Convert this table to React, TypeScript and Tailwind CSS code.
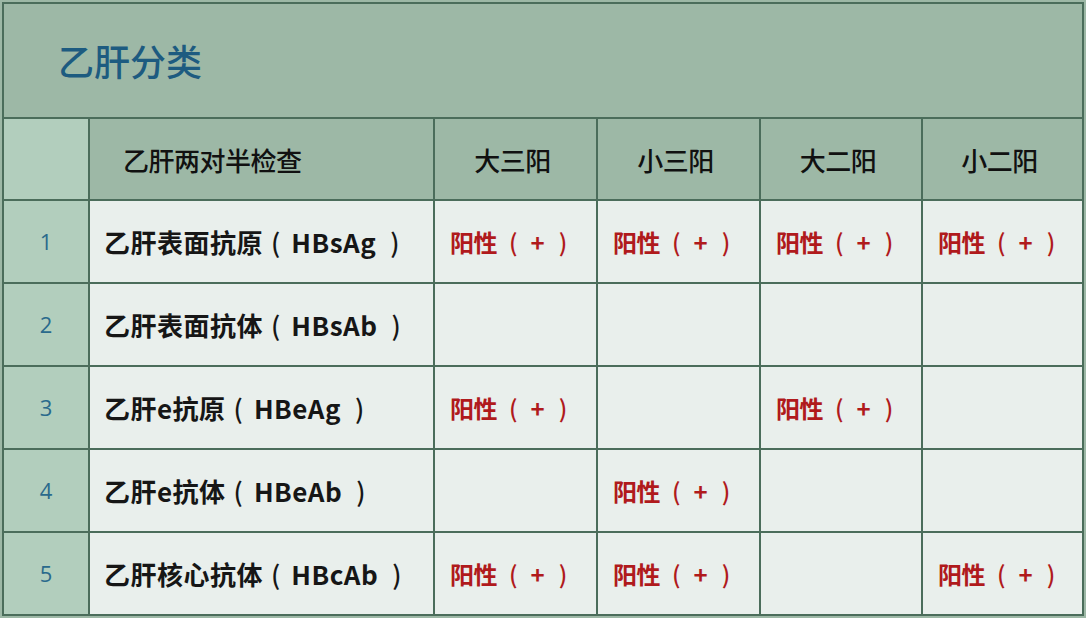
import React from 'react';

const cols = ['大三阳', '小三阳', '大二阳', '小二阳'];

const rows: { cn: string; en: string; marks: boolean[] }[] = [
  { cn: '乙肝表面抗原', en: 'HBsAg', marks: [true, true, true, true] },
  { cn: '乙肝表面抗体', en: 'HBsAb', marks: [false, false, false, false] },
  { cn: '乙肝e抗原', en: 'HBeAg', marks: [true, false, true, false] },
  { cn: '乙肝e抗体', en: 'HBeAb', marks: [false, true, false, false] },
  { cn: '乙肝核心抗体', en: 'HBcAb', marks: [true, true, false, true] },
];

const font = { fontFamily: '"Noto Sans CJK SC", "Noto Sans", sans-serif' };

const Positive = () => (
  <span className="flex items-center text-[24px] font-bold text-[#b01a1c]">
    <span className="tracking-[-0.5px]">阳性</span>
    <span className="ml-[12px] font-medium">(</span>
    <span className="ml-[13px]">+</span>
    <span className="ml-[14px] font-medium">)</span>
  </span>
);

export default function App() {
  return (
    <div className="w-[1086px] h-[618px] bg-[#9db8a6] p-[2px]" style={font}>
      <div className="grid grid-cols-[84px_343px_161px_161px_160px_159px] grid-rows-[113px_80px_81px_81px_81px_81px_81px] gap-[2px] p-[2px] bg-[#4b6d5b]">
        <div className="col-span-6 bg-[#9db8a6] flex items-center pl-[54px] pb-[2px]">
          <span className="text-[36px] font-medium text-[#1d5b80]">乙肝分类</span>
        </div>

        <div className="bg-[#b2cebd]" />
        <div className="bg-[#9db8a6] flex items-center pl-[33px]">
          <span className="text-[26px] font-medium text-[#111] tracking-[-0.5px]">乙肝两对半检查</span>
        </div>
        {cols.map((c) => (
          <div key={c} className="bg-[#9db8a6] flex items-center justify-center pr-[6px]">
            <span className="text-[26px] font-medium text-[#111] tracking-[-0.5px]">{c}</span>
          </div>
        ))}

        {rows.map((r, i) => (
          <React.Fragment key={r.cn}>
            <div className="bg-[#b2cebd] flex items-center justify-center">
              <span className="text-[22px] text-[#2a6a8c]" style={{ fontFamily: '"Open Sans", sans-serif' }}>{i + 1}</span>
            </div>
            <div className="bg-[#e9efec] flex items-center pl-[14px] text-[26px] font-bold text-[#161616]">
              <span className="tracking-[0.5px]">{r.cn}</span>
              <span className="ml-[8px] font-medium">(</span>
              <span className="ml-[11px] tracking-[0.5px]">{r.en}</span>
              <span className="ml-[14px] font-medium">)</span>
            </div>
            {r.marks.map((m, j) => (
              <div key={j} className="bg-[#e9efec] flex items-center pl-[15px]">
                {m && <Positive />}
              </div>
            ))}
          </React.Fragment>
        ))}
      </div>
    </div>
  );
}
